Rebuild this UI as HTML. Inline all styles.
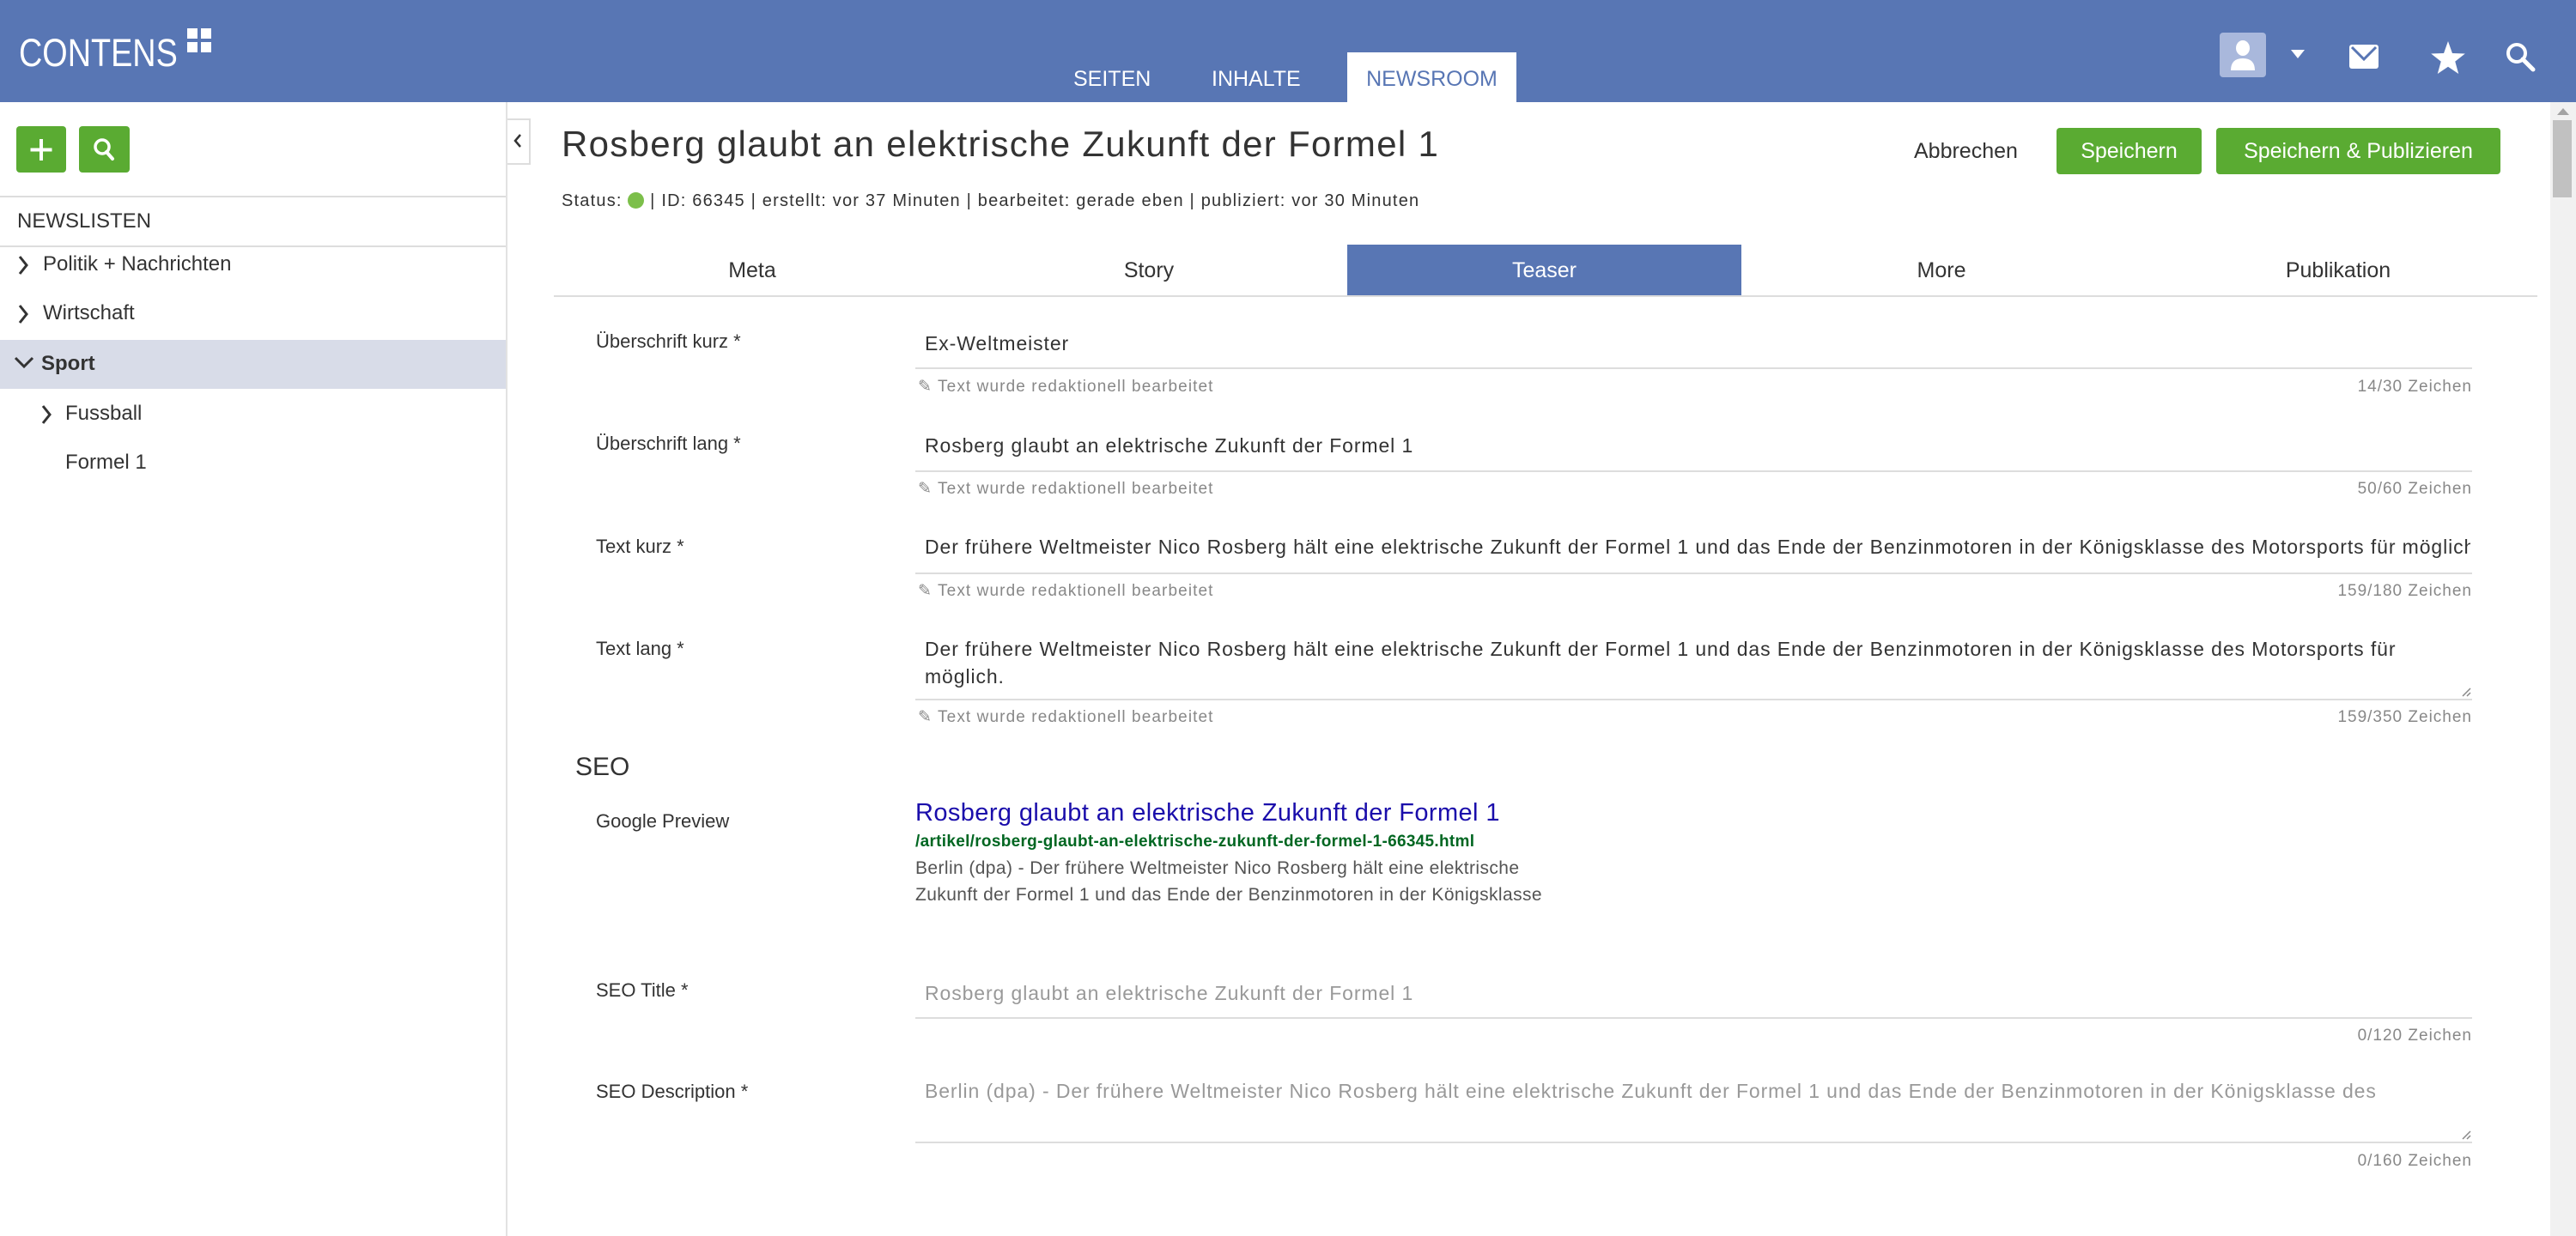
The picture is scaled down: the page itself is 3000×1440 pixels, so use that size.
<!DOCTYPE html>
<html><head><meta charset="utf-8">
<style>
*{margin:0;padding:0;box-sizing:border-box}
body{width:3000px;height:1440px;overflow:hidden;background:#fff;font-family:"Liberation Sans",sans-serif;color:#333;position:relative}
.a{position:absolute;white-space:nowrap}
.hdr{position:absolute;left:0;top:0;width:3000px;height:119px;background:#5876b4}
.nav{color:#fff;font-size:25px;line-height:40px}
.green{background:#5aab32;border-radius:4px}
.lbl{font-size:22px;line-height:30px;color:#333}
.val{font-size:23px;line-height:32px;color:#333;letter-spacing:0.9px}
.ln{position:absolute;left:1066px;width:1813px;height:2px;background:#ddd}
.help{font-size:19px;line-height:24px;color:#888;letter-spacing:1.1px}
.cnt{font-size:19px;line-height:24px;color:#888;text-align:right;width:400px;left:2479px;letter-spacing:1px}
.tab{position:absolute;top:285px;height:60px;width:462px;text-align:center;font-size:25px;line-height:60px;color:#333}
.side{font-size:24px;line-height:30px;color:#333}
</style></head><body>
<div class="hdr"></div>
<div class="a" style="left:22px;top:36px;font-size:45px;line-height:52px;color:#fff;transform:scaleX(0.84);transform-origin:0 0">CONTENS</div>
<div class="a" style="left:218px;top:33px;width:12px;height:12px;background:#fff"></div>
<div class="a" style="left:234px;top:33px;width:12px;height:12px;background:#fff"></div>
<div class="a" style="left:218px;top:49px;width:12px;height:12px;background:#fff"></div>
<div class="a" style="left:234px;top:49px;width:12px;height:12px;background:#fff"></div>
<div class="a nav" style="left:1250px;top:72px">SEITEN</div>
<div class="a nav" style="left:1411px;top:72px">INHALTE</div>
<div class="a" style="left:1569px;top:61px;width:197px;height:58px;background:#fff"></div>
<div class="a nav" style="left:1569px;width:197px;text-align:center;top:72px;color:#5876b4">NEWSROOM</div>
<!-- right icons -->
<div class="a" style="left:2585px;top:38px;width:54px;height:52px;background:#a9b8dc;border-radius:4px"></div>
<svg class="a" style="left:2585px;top:38px" width="54" height="52" viewBox="0 0 54 52"><ellipse cx="27" cy="18" rx="8" ry="9" fill="#fff"/><path d="M13 44 Q13 30 27 30 Q41 30 41 44 Z" fill="#fff"/></svg>
<svg class="a" style="left:2668px;top:58px" width="16" height="12" viewBox="0 0 16 12"><path d="M0 0H16L8 10Z" fill="#fff"/></svg>
<svg class="a" style="left:2736px;top:52px" width="34" height="28" viewBox="0 0 34 28"><rect x="0" y="0" width="34" height="28" rx="3" fill="#fff"/><path d="M3 3 L17 17 L31 3" stroke="#5876b4" stroke-width="3" fill="none"/></svg>
<svg class="a" style="left:2831px;top:48px" width="40" height="38" viewBox="0 0 24 23"><path d="M12 0 L15 8.5 L24 8.8 L17 14.3 L19.4 23 L12 18 L4.6 23 L7 14.3 L0 8.8 L9 8.5Z" fill="#fff"/></svg>
<svg class="a" style="left:2917px;top:48px" width="36" height="36" viewBox="0 0 36 36"><circle cx="14" cy="14" r="10" stroke="#fff" stroke-width="4" fill="none"/><path d="M21 21 L33 33" stroke="#fff" stroke-width="5" stroke-linecap="round"/></svg>

<!-- sidebar -->
<div class="a" style="left:589px;top:119px;width:2px;height:1321px;background:#e2e2e2"></div>
<div class="a green" style="left:19px;top:147px;width:58px;height:54px"></div>
<svg class="a" style="left:19px;top:147px" width="58" height="54"><path d="M29 15V40M16.5 27.5H41.5" stroke="#fff" stroke-width="4"/></svg>
<div class="a green" style="left:92px;top:147px;width:59px;height:54px"></div>
<svg class="a" style="left:92px;top:147px" width="59" height="54"><circle cx="27" cy="24" r="8" stroke="#fff" stroke-width="3.5" fill="none"/><path d="M32 30L39 38" stroke="#fff" stroke-width="4" stroke-linecap="round"/></svg>
<div class="a" style="left:0;top:228px;width:589px;height:2px;background:#ddd"></div>
<div class="a side" style="left:20px;top:243px;font-size:24px">NEWSLISTEN</div>
<div class="a" style="left:0;top:286px;width:589px;height:2px;background:#ddd"></div>
<svg class="a" style="left:20px;top:297px" width="14" height="24"><path d="M3 2L11 12L3 22" stroke="#333" stroke-width="3" fill="none"/></svg>
<div class="a side" style="left:50px;top:293px">Politik + Nachrichten</div>
<svg class="a" style="left:20px;top:354px" width="14" height="24"><path d="M3 2L11 12L3 22" stroke="#333" stroke-width="3" fill="none"/></svg>
<div class="a side" style="left:50px;top:350px">Wirtschaft</div>
<div class="a" style="left:0;top:396px;width:589px;height:57px;background:#d8dce8"></div>
<svg class="a" style="left:16px;top:414px" width="24" height="16"><path d="M2 3L12 13L22 3" stroke="#333" stroke-width="3" fill="none"/></svg>
<div class="a side" style="left:48px;top:409px;font-weight:bold">Sport</div>
<svg class="a" style="left:47px;top:471px" width="14" height="24"><path d="M3 2L11 12L3 22" stroke="#333" stroke-width="3" fill="none"/></svg>
<div class="a side" style="left:76px;top:467px">Fussball</div>
<div class="a side" style="left:76px;top:524px">Formel 1</div>
<div class="a" style="left:591px;top:138px;width:27px;height:54px;border:2px solid #ddd;border-left:none;background:#fff"></div>
<svg class="a" style="left:597px;top:155px" width="12" height="18"><path d="M9 2L3 9L9 16" stroke="#333" stroke-width="2.5" fill="none"/></svg>

<!-- scrollbar -->
<div class="a" style="left:2970px;top:119px;width:30px;height:1321px;background:#f1f1f1"></div>
<div class="a" style="left:2973px;top:140px;width:22px;height:90px;background:#c1c1c1"></div>
<svg class="a" style="left:2978px;top:124px" width="14" height="10"><path d="M0 10L7 2L14 10Z" fill="#a3a3a3"/></svg>

<!-- title -->
<div class="a" style="left:654px;top:142px;font-size:42px;line-height:52px;color:#333;letter-spacing:1.3px">Rosberg glaubt an elektrische Zukunft der Formel 1</div>
<div class="a" style="left:2229px;top:160px;font-size:25px;line-height:32px;color:#333">Abbrechen</div>
<div class="a green" style="left:2395px;top:149px;width:169px;height:54px;color:#fff;font-size:25px;line-height:54px;text-align:center">Speichern</div>
<div class="a green" style="left:2581px;top:149px;width:331px;height:54px;color:#fff;font-size:25px;line-height:54px;text-align:center">Speichern &amp; Publizieren</div>
<div class="a" style="left:654px;top:222px;font-size:20px;line-height:24px;color:#333;letter-spacing:1.2px">Status: <span style="display:inline-block;width:19px;height:19px;border-radius:50%;background:#7cbf4a;vertical-align:-3px"></span> | ID: 66345 | erstellt: vor 37 Minuten | bearbeitet: gerade eben | publiziert: vor 30 Minuten</div>

<!-- tabs -->
<div class="tab" style="left:645px">Meta</div>
<div class="tab" style="left:1107px">Story</div>
<div class="tab" style="left:1569px;width:459px;background:#5876b4;color:#fff">Teaser</div>
<div class="tab" style="left:2030px">More</div>
<div class="tab" style="left:2492px">Publikation</div>
<div class="a" style="left:645px;top:344px;width:2310px;height:2px;background:#ddd"></div>

<!-- form rows -->
<div class="a lbl" style="left:694px;top:383px">Überschrift kurz *</div>
<div class="a val" style="left:1077px;top:384px">Ex-Weltmeister</div>
<div class="ln" style="top:428px"></div>
<div class="a help" style="left:1069px;top:439px">✎ Text wurde redaktionell bearbeitet</div>
<div class="a cnt" style="top:439px">14/30 Zeichen</div>

<div class="a lbl" style="left:694px;top:502px">Überschrift lang *</div>
<div class="a val" style="left:1077px;top:503px">Rosberg glaubt an elektrische Zukunft der Formel 1</div>
<div class="ln" style="top:548px"></div>
<div class="a help" style="left:1069px;top:558px">✎ Text wurde redaktionell bearbeitet</div>
<div class="a cnt" style="top:558px">50/60 Zeichen</div>

<div class="a lbl" style="left:694px;top:622px">Text kurz *</div>
<div class="a val" style="left:1077px;top:621px;width:1800px;overflow:hidden">Der frühere Weltmeister Nico Rosberg hält eine elektrische Zukunft der Formel 1 und das Ende der Benzinmotoren in der Königsklasse des Motorsports für möglich.</div>
<div class="ln" style="top:667px"></div>
<div class="a help" style="left:1069px;top:677px">✎ Text wurde redaktionell bearbeitet</div>
<div class="a cnt" style="top:677px">159/180 Zeichen</div>

<div class="a lbl" style="left:694px;top:741px">Text lang *</div>
<div class="a val" style="left:1077px;top:740px">Der frühere Weltmeister Nico Rosberg hält eine elektrische Zukunft der Formel 1 und das Ende der Benzinmotoren in der Königsklasse des Motorsports für</div>
<div class="a val" style="left:1077px;top:772px">möglich.</div>
<svg class="a" style="left:2866px;top:800px" width="12" height="12"><path d="M11 2L2 11M11 7L7 11" stroke="#888" stroke-width="1.5"/></svg>
<div class="ln" style="top:814px"></div>
<div class="a help" style="left:1069px;top:824px">✎ Text wurde redaktionell bearbeitet</div>
<div class="a cnt" style="top:824px">159/350 Zeichen</div>

<div class="a" style="left:670px;top:876px;font-size:30px;line-height:36px;color:#333">SEO</div>
<div class="a lbl" style="left:694px;top:942px">Google Preview</div>
<div class="a" style="left:1066px;top:930px;font-size:29px;line-height:34px;color:#1a0dab;letter-spacing:0.4px">Rosberg glaubt an elektrische Zukunft der Formel 1</div>
<div class="a" style="left:1066px;top:969px;font-size:19px;line-height:24px;color:#006621;font-weight:bold;letter-spacing:0.3px">/artikel/rosberg-glaubt-an-elektrische-zukunft-der-formel-1-66345.html</div>
<div class="a" style="left:1066px;top:1000px;font-size:21px;line-height:24px;color:#545454;letter-spacing:0.4px">Berlin (dpa) - Der frühere Weltmeister Nico Rosberg hält eine elektrische</div>
<div class="a" style="left:1066px;top:1031px;font-size:21px;line-height:24px;color:#545454;letter-spacing:0.4px">Zukunft der Formel 1 und das Ende der Benzinmotoren in der Königsklasse</div>

<div class="a lbl" style="left:694px;top:1139px">SEO Title *</div>
<div class="a val" style="left:1077px;top:1141px;color:#999">Rosberg glaubt an elektrische Zukunft der Formel 1</div>
<div class="ln" style="top:1185px"></div>
<div class="a cnt" style="top:1195px">0/120 Zeichen</div>

<div class="a lbl" style="left:694px;top:1257px">SEO Description *</div>
<div class="a val" style="left:1077px;top:1255px;color:#999">Berlin (dpa) - Der frühere Weltmeister Nico Rosberg hält eine elektrische Zukunft der Formel 1 und das Ende der Benzinmotoren in der Königsklasse des</div>
<svg class="a" style="left:2866px;top:1316px" width="12" height="12"><path d="M11 2L2 11M11 7L7 11" stroke="#888" stroke-width="1.5"/></svg>
<div class="ln" style="top:1330px"></div>
<div class="a cnt" style="top:1341px">0/160 Zeichen</div>
</body></html>
